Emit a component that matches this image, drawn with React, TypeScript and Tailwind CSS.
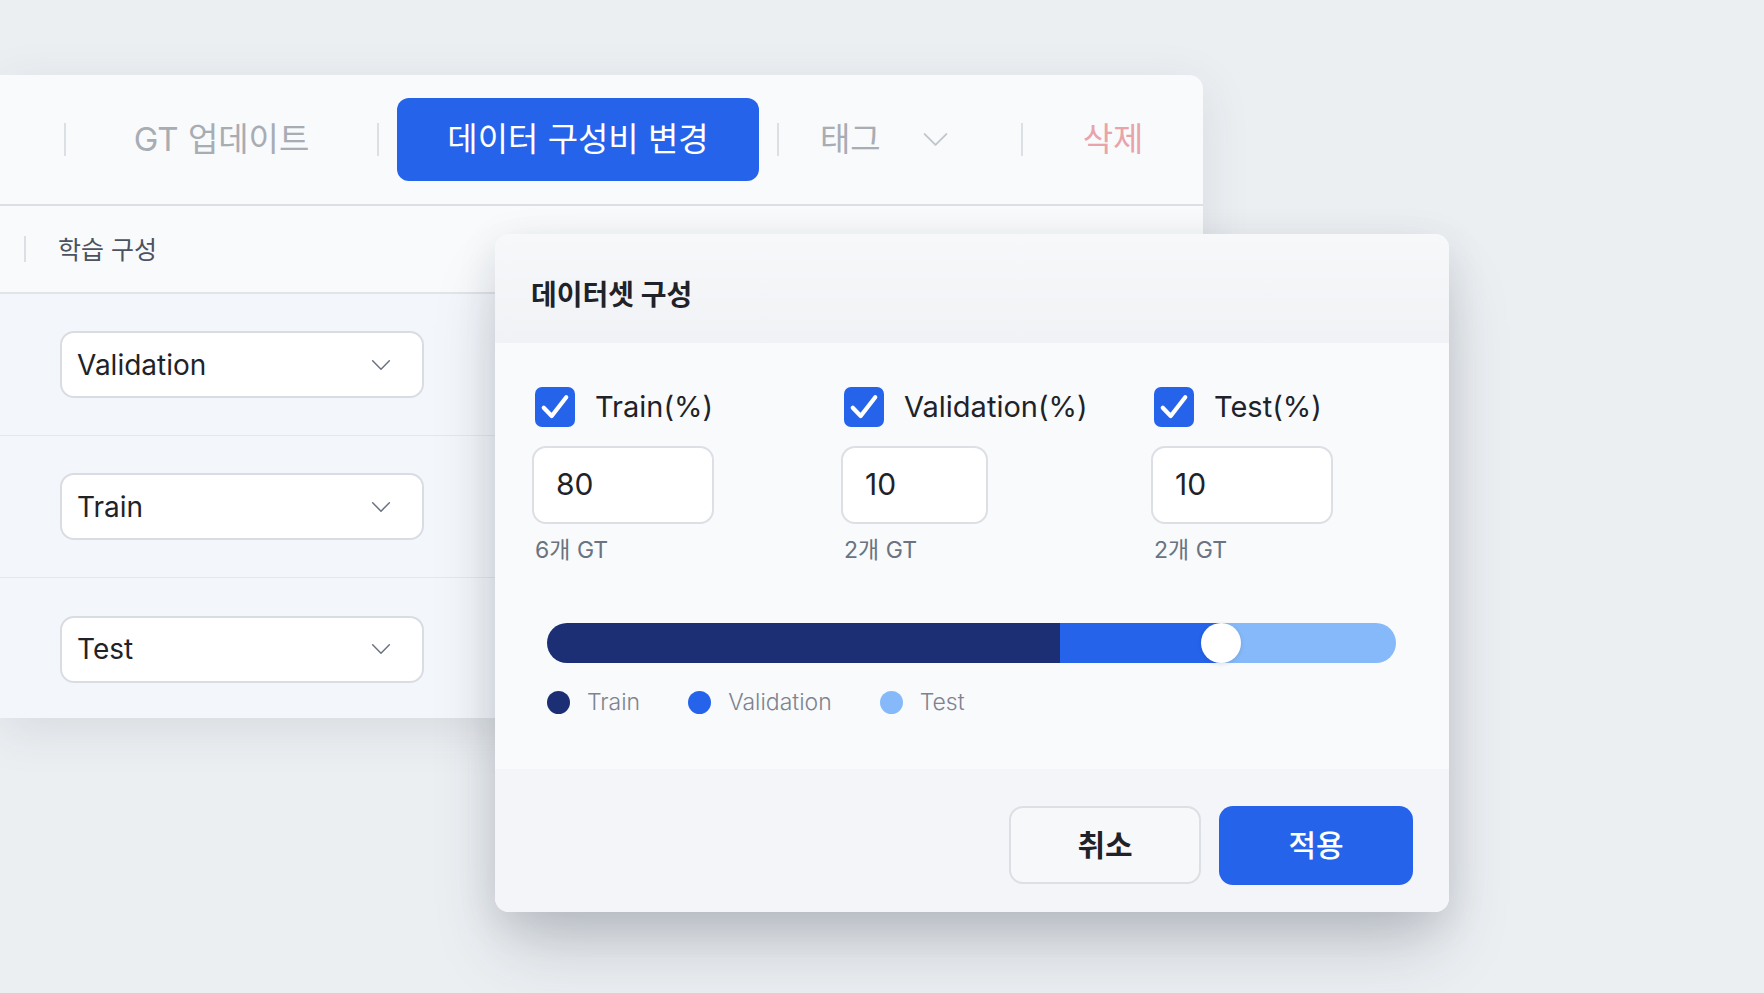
import React from 'react'

const font = "font-['Inter','Noto_Sans_CJK_KR',sans-serif]"

function Chevron({ className }: { className?: string }) {
  return (
    <svg viewBox="0 0 22 12" fill="none" className={className}>
      <polyline points="1,1 11,11 21,1" stroke="currentColor" strokeWidth="1.8" strokeLinecap="round" strokeLinejoin="round" />
    </svg>
  )
}

function Divider({ className = 'h-[33px]' }: { className?: string }) {
  return <div className={`w-[2px] shrink-0 bg-[#dcdfe4] ${className}`} />
}

function SplitSelect({ value }: { value: string }) {
  return (
    <div className="flex h-[142px] items-center border-b border-[#e4e8ee] pl-[60px] last:border-b-0">
      <div className="flex h-[67px] w-[364px] items-center justify-between rounded-[14px] border-2 border-[#d9dde3] bg-white pl-[15px] pr-[31px]">
        <span className="text-[28px] text-[#1f2329]">{value}</span>
        <Chevron className="h-[10px] w-[20px] text-[#6b7280]" />
      </div>
    </div>
  )
}

function Checkbox() {
  return (
    <div className="flex h-[40px] w-[40px] items-center justify-center rounded-[7px] bg-[#2563eb]">
      <svg viewBox="0 0 24 24" className="h-[36px] w-[36px]" fill="none">
        <polyline points="4.5,12.5 9.8,18 19.5,5.5" stroke="white" strokeWidth="2.8" strokeLinecap="round" strokeLinejoin="round" />
      </svg>
    </div>
  )
}

const splits = [
  { label: 'Train(%)', value: '80', count: '6개 GT', col: 'w-[309px]', input: 'w-[182px]' },
  { label: 'Validation(%)', value: '10', count: '2개 GT', col: 'w-[310px]', input: 'w-[147px]' },
  { label: 'Test(%)', value: '10', count: '2개 GT', col: 'flex-1', input: 'w-[182px]' },
]

const legend = [
  { name: 'Train', dot: 'bg-[#1c2f74]' },
  { name: 'Validation', dot: 'bg-[#2563eb]' },
  { name: 'Test', dot: 'bg-[#86b9f9]' },
]

export default function App() {
  return (
    <div className={`relative h-[993px] w-[1764px] overflow-hidden bg-[#eceff2] ${font}`}>
      <div className="pt-[75px]">
        {/* list panel behind the dialog */}
        <div className="h-[643px] w-[1203px] overflow-hidden rounded-r-[14px] bg-[#f8fafb] shadow-[0_12px_50px_rgba(30,41,59,0.10)]">
          <div className="flex h-[131px] items-center border-b-2 border-[#dcdfe4] pl-[64px]">
            <Divider />
            <div className="flex w-[311px] justify-center">
              <span className="text-[33px] text-[#a8acb3]">GT 업데이트</span>
            </div>
            <Divider />
            <button className="ml-[18px] flex h-[83px] w-[362px] items-center justify-center rounded-[12px] bg-[#2563eb] text-[33px] text-white">
              데이터 구성비 변경
            </button>
            <div className="ml-[18px]">
              <Divider />
            </div>
            <div className="flex w-[242px] items-center pl-[41px]">
              <span className="text-[33px] text-[#a8acb3]">태그</span>
              <Chevron className="ml-[42px] h-[13px] w-[25px] text-[#c3c7cd]" />
            </div>
            <Divider />
            <div className="flex flex-1 justify-center">
              <span className="text-[33px] text-[#e8a3ab]">삭제</span>
            </div>
          </div>

          <div className="flex h-[88px] items-center border-b-2 border-[#e1e4e9] pl-[24px]">
            <Divider className="h-[26px]" />
            <span className="ml-[32px] mt-[3px] text-[25px] text-[#4b5260]">학습 구성</span>
          </div>

          <div className="bg-[#f3f6fa]">
            <SplitSelect value="Validation" />
            <SplitSelect value="Train" />
            <SplitSelect value="Test" />
          </div>
        </div>
      </div>

      {/* split ratio dialog */}
      <div className="absolute left-[495px] top-[234px] flex h-[678px] w-[954px] flex-col overflow-hidden rounded-[14px] bg-[#f8fafc] shadow-[0_40px_70px_-10px_rgba(30,41,59,0.22),0_10px_40px_rgba(30,41,59,0.10)]">
        <div className="flex h-[109px] items-center bg-gradient-to-b from-[#f7f8fa] to-[#f1f2f5] pl-[36px] pt-[12px]">
          <h2 className="text-[28px] font-bold text-[#1f2329]">데이터셋 구성</h2>
        </div>

        <div className="flex h-[426px] flex-col bg-[#f8fafc] pl-[37px] pt-[42px]">
          <div className="flex">
            {splits.map((s) => (
              <div key={s.label} className={s.col}>
                <div className="ml-[3px] flex items-center gap-[20px]">
                  <Checkbox />
                  <span className="text-[29px] text-[#1f2329]">{s.label}</span>
                </div>
                <div className={`mt-[17px] flex h-[78px] items-center rounded-[14px] border-2 border-[#dcdfe4] bg-white pl-[22px] ${s.input}`}>
                  <span className="text-[30px] text-[#1f2329]">{s.value}</span>
                </div>
                <div className="ml-[3px] mt-[9px] text-[23px] text-[#6b7280]">{s.count}</div>
              </div>
            ))}
          </div>

          <div className="ml-[15px] mt-[56px] w-[849px]">
            <div className="relative flex h-[40px] rounded-full">
              <div className="w-[513px] rounded-l-full bg-[#1c2f74]" />
              <div className="w-[161px] bg-[#2563eb]" />
              <div className="flex-1 rounded-r-full bg-[#86b9f9]" />
              <div className="absolute left-[654px] top-0 h-[40px] w-[40px] rounded-full bg-white shadow-[0_1px_4px_rgba(0,0,0,0.12)]" />
            </div>
            <div className="mt-[22px] flex items-center gap-[48px]">
              {legend.map((l) => (
                <div key={l.name} className="flex items-center gap-[17px]">
                  <span className={`h-[23px] w-[23px] rounded-full ${l.dot}`} />
                  <span className="text-[23px] font-light text-[#7d8390]">{l.name}</span>
                </div>
              ))}
            </div>
          </div>
        </div>

        <div className="flex flex-1 items-center justify-end gap-[18px] bg-[#f3f5f8] pr-[36px] pt-[9px]">
          <button className="h-[78px] w-[192px] rounded-[14px] border-2 border-[#dcdfe4] bg-[#f7f8fa] text-[30px] font-bold text-[#1f2329]">
            취소
          </button>
          <button className="h-[79px] w-[194px] rounded-[14px] bg-[#2563eb] text-[30px] font-medium text-white">
            적용
          </button>
        </div>
      </div>
    </div>
  )
}
